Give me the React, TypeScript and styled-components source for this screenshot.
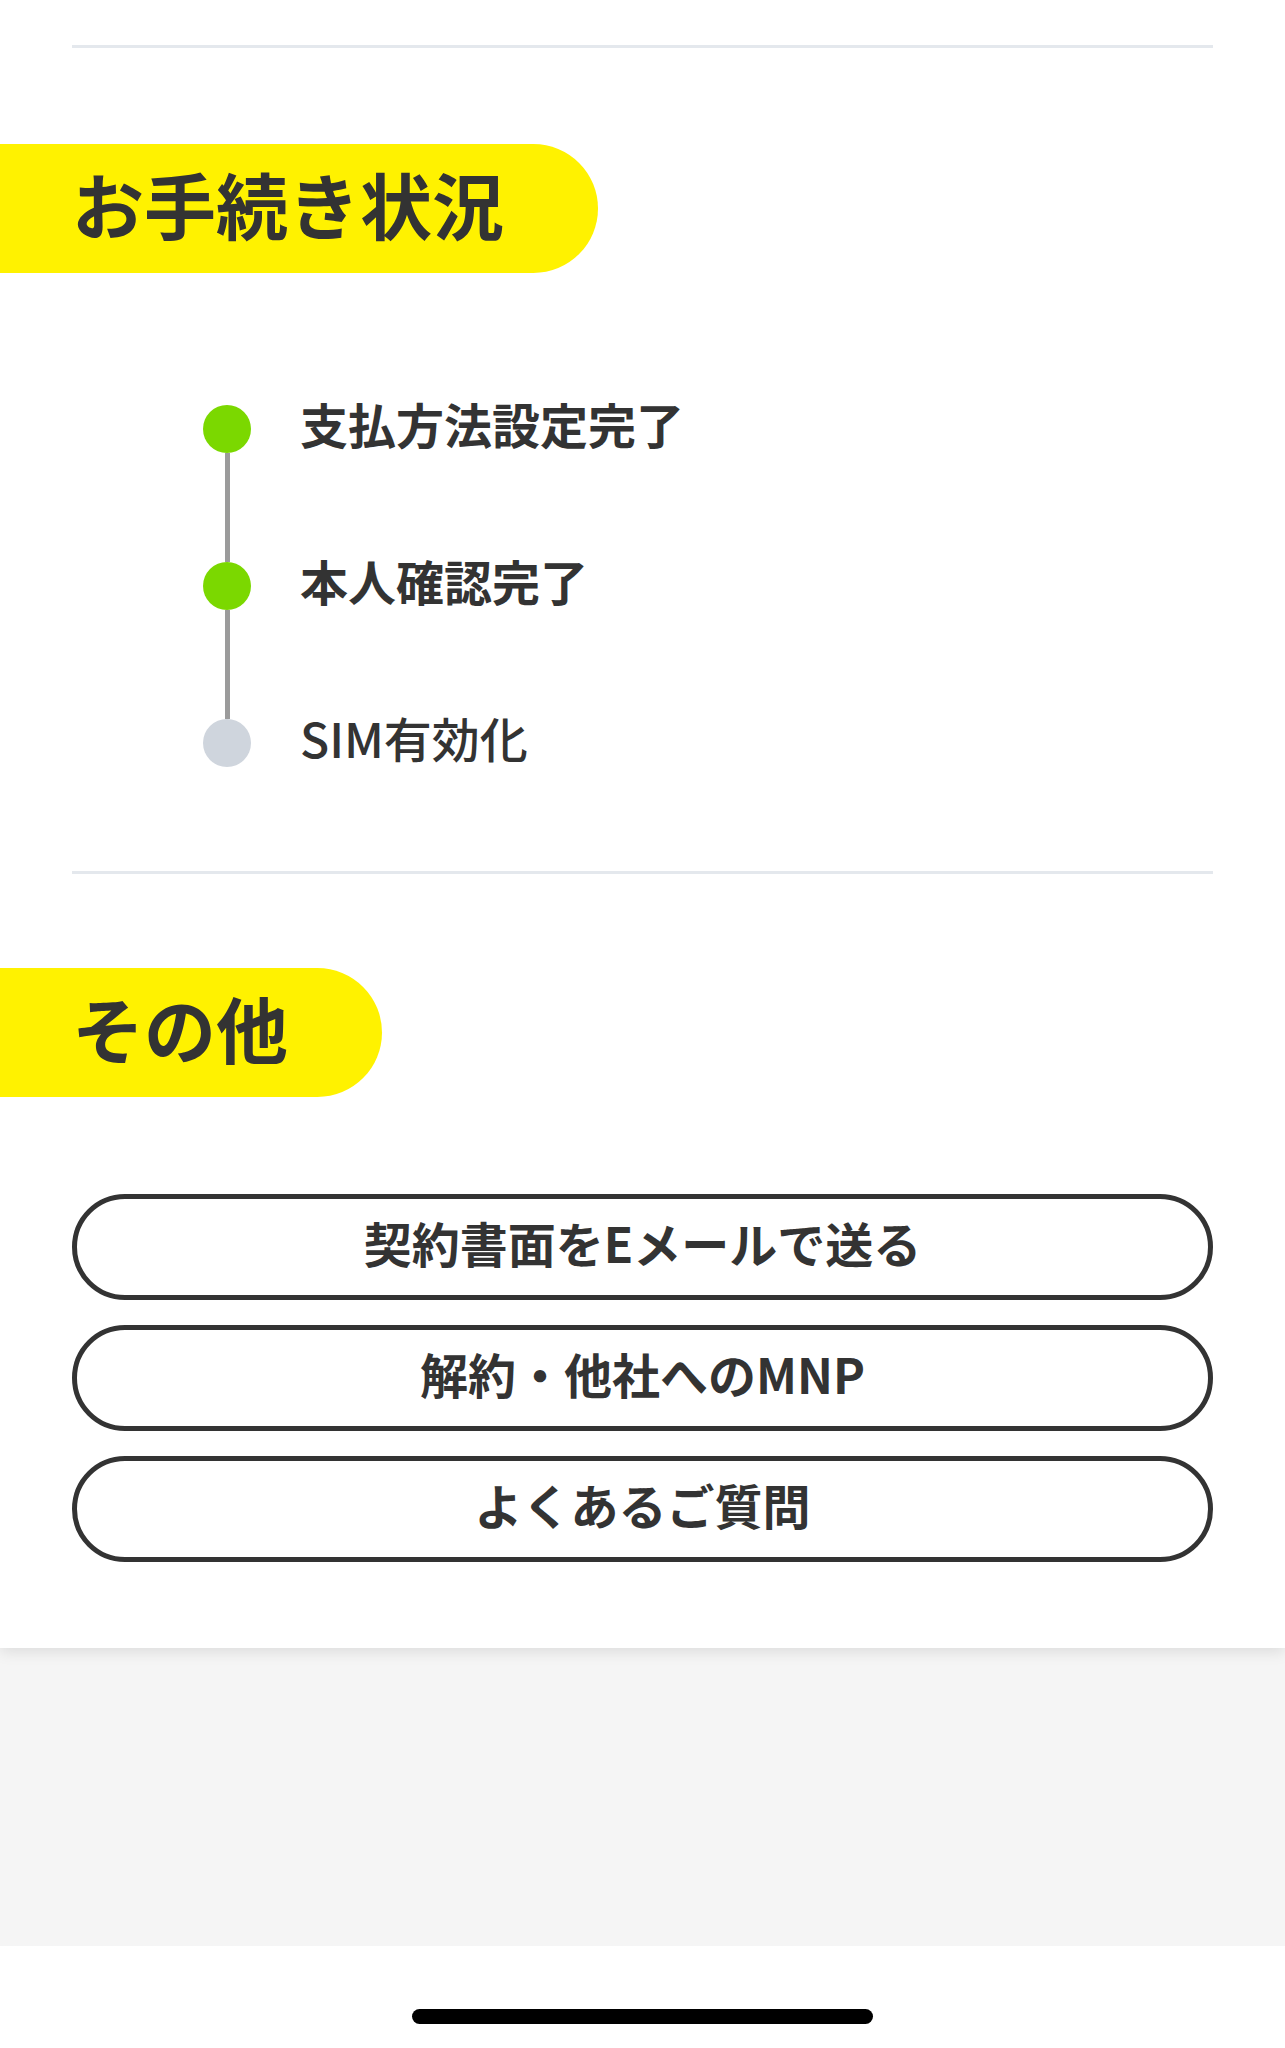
import React from "react";
import styled, { createGlobalStyle } from "styled-components";

const GlobalStyle = createGlobalStyle`
  html, body {
    margin: 0;
    padding: 0;
    background: #ffffff;
  }
  body {
    font-family: "Noto Sans CJK JP", "Noto Sans", "Liberation Sans", sans-serif;
    color: #333333;
  }
  * { box-sizing: border-box; }
`;

const Page = styled.div`
  min-height: 2048px;
  display: flex;
  flex-direction: column;
`;

const Card = styled.main`
  background: #ffffff;
  padding: 45px 0 86px;
  display: flex;
  flex-direction: column;
  box-shadow: 0 4px 14px rgba(0, 0, 0, 0.1);
  position: relative;
  z-index: 1;
`;

const Divider = styled.hr<{ $after: number }>`
  border: none;
  height: 3px;
  margin: 0 72px ${(p) => p.$after}px;
  background: #e4e8ed;
`;

const Heading = styled.h2<{ $after: number }>`
  align-self: flex-start;
  display: flex;
  align-items: center;
  height: 129px;
  margin: 0 0 ${(p) => p.$after}px;
  padding: 0 94px 12px 72px;
  background: #fff200;
  border-radius: 0 65px 65px 0;
  font-size: 72px;
  font-weight: 700;
  line-height: 1;
  color: #333333;
`;

const Timeline = styled.ol`
  list-style: none;
  margin: 0 0 104px;
  padding: 0 0 0 203px;
  display: flex;
  flex-direction: column;
`;

const Step = styled.li`
  display: grid;
  grid-template-columns: 48px 1fr;
  column-gap: 49px;
  align-items: start;
`;

const Marker = styled.div`
  display: flex;
  flex-direction: column;
  align-items: center;
`;

const Dot = styled.span<{ $done: boolean }>`
  width: 48px;
  height: 48px;
  border-radius: 50%;
  background: ${(p) => (p.$done ? "#7bd800" : "#cfd5dd")};
`;

const Connector = styled.span`
  width: 5px;
  height: 109px;
  background: #9b9b9b;
`;

const StepLabel = styled.span<{ $done: boolean }>`
  font-size: 48px;
  line-height: 48px;
  margin-top: -6px;
  font-weight: ${(p) => (p.$done ? 700 : 500)};
  color: #333333;
  white-space: nowrap;
`;

const ButtonList = styled.div`
  margin: 0 72px;
  display: flex;
  flex-direction: column;
  gap: 25px;
`;

const PillButton = styled.button`
  height: 106px;
  width: 100%;
  border: 5px solid #333333;
  border-radius: 53px;
  background: #ffffff;
  color: #333333;
  font-family: "Noto Sans CJK JP", "Noto Sans", sans-serif;
  font-size: 48px;
  font-weight: 700;
  line-height: 1;
  display: flex;
  align-items: center;
  justify-content: center;
  padding: 0 0 10px;
  cursor: pointer;
`;

const Filler = styled.div`
  flex: 1;
  background: #f5f5f5;
`;

const HomeBar = styled.div`
  height: 102px;
  background: #ffffff;
  display: flex;
  align-items: flex-start;
  justify-content: center;
  padding-top: 63px;
`;

const Indicator = styled.span`
  width: 461px;
  height: 15px;
  border-radius: 8px;
  background: #000000;
`;

const steps = [
  { label: "支払方法設定完了", done: true },
  { label: "本人確認完了", done: true },
  { label: "SIM有効化", done: false },
];

const actions = ["契約書面をEメールで送る", "解約・他社へのMNP", "よくあるご質問"];

export default function App() {
  return (
    <Page>
      <GlobalStyle />
      <Card>
        <Divider $after={96} />
        <Heading $after={132}>お手続き状況</Heading>
        <Timeline>
          {steps.map((s, i) => (
            <Step key={s.label}>
              <Marker>
                <Dot $done={s.done} />
                {i < steps.length - 1 && <Connector />}
              </Marker>
              <StepLabel $done={s.done}>{s.label}</StepLabel>
            </Step>
          ))}
        </Timeline>
        <Divider $after={94} />
        <Heading $after={97}>その他</Heading>
        <ButtonList>
          {actions.map((a) => (
            <PillButton key={a}>{a}</PillButton>
          ))}
        </ButtonList>
      </Card>
      <Filler />
      <HomeBar>
        <Indicator />
      </HomeBar>
    </Page>
  );
}
